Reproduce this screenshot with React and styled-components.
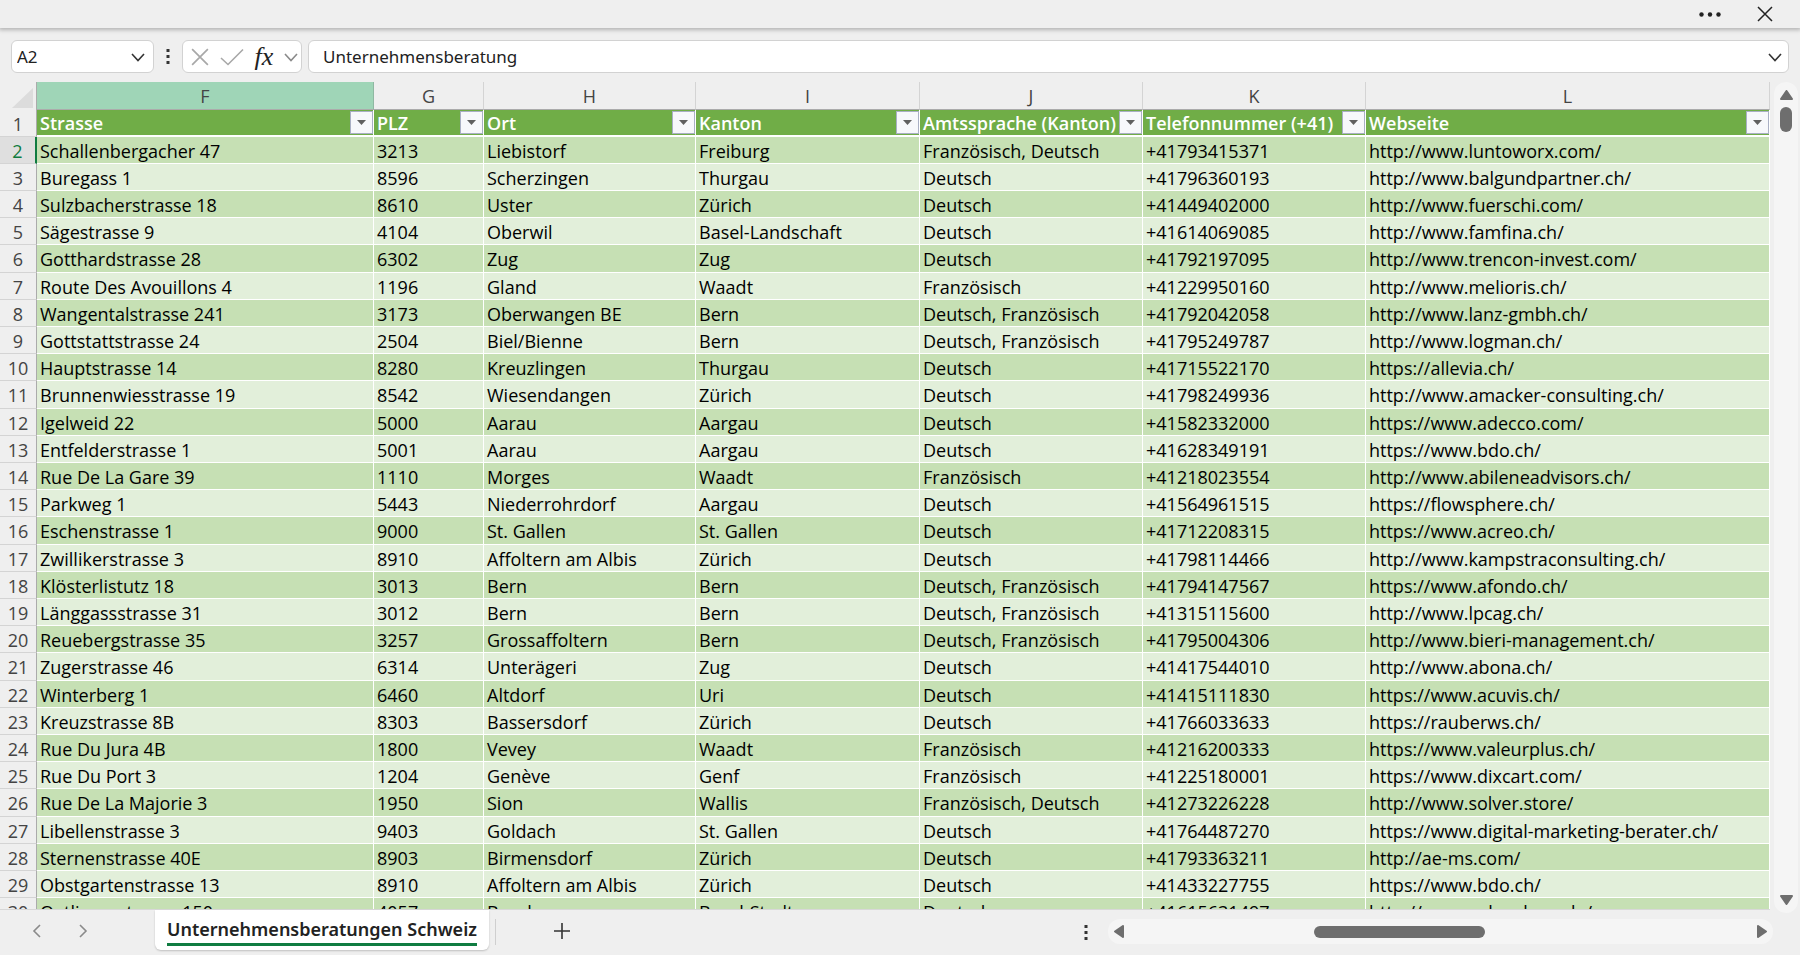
import React from "react";
import styled, { createGlobalStyle, css } from "styled-components";

const columns = [
    { letter: "F", title: "Strasse", w: 337, active: true },
    { letter: "G", title: "PLZ", w: 110 },
    { letter: "H", title: "Ort", w: 212 },
    { letter: "I", title: "Kanton", w: 224 },
    { letter: "J", title: "Amtssprache (Kanton)", w: 223 },
    { letter: "K", title: "Telefonnummer (+41)", w: 223 },
    { letter: "L", title: "Webseite" },
]

const rows = [
    ["Schallenbergacher 47", "3213", "Liebistorf", "Freiburg", "Französisch, Deutsch", "+41793415371", "http://www.luntoworx.com/"],
    ["Buregass 1", "8596", "Scherzingen", "Thurgau", "Deutsch", "+41796360193", "http://www.balgundpartner.ch/"],
    ["Sulzbacherstrasse 18", "8610", "Uster", "Zürich", "Deutsch", "+41449402000", "http://www.fuerschi.com/"],
    ["Sägestrasse 9", "4104", "Oberwil", "Basel-Landschaft", "Deutsch", "+41614069085", "http://www.famfina.ch/"],
    ["Gotthardstrasse 28", "6302", "Zug", "Zug", "Deutsch", "+41792197095", "http://www.trencon-invest.com/"],
    ["Route Des Avouillons 4", "1196", "Gland", "Waadt", "Französisch", "+41229950160", "http://www.melioris.ch/"],
    ["Wangentalstrasse 241", "3173", "Oberwangen BE", "Bern", "Deutsch, Französisch", "+41792042058", "http://www.lanz-gmbh.ch/"],
    ["Gottstattstrasse 24", "2504", "Biel/Bienne", "Bern", "Deutsch, Französisch", "+41795249787", "http://www.logman.ch/"],
    ["Hauptstrasse 14", "8280", "Kreuzlingen", "Thurgau", "Deutsch", "+41715522170", "https://allevia.ch/"],
    ["Brunnenwiesstrasse 19", "8542", "Wiesendangen", "Zürich", "Deutsch", "+41798249936", "http://www.amacker-consulting.ch/"],
    ["Igelweid 22", "5000", "Aarau", "Aargau", "Deutsch", "+41582332000", "https://www.adecco.com/"],
    ["Entfelderstrasse 1", "5001", "Aarau", "Aargau", "Deutsch", "+41628349191", "https://www.bdo.ch/"],
    ["Rue De La Gare 39", "1110", "Morges", "Waadt", "Französisch", "+41218023554", "http://www.abileneadvisors.ch/"],
    ["Parkweg 1", "5443", "Niederrohrdorf", "Aargau", "Deutsch", "+41564961515", "https://flowsphere.ch/"],
    ["Eschenstrasse 1", "9000", "St. Gallen", "St. Gallen", "Deutsch", "+41712208315", "https://www.acreo.ch/"],
    ["Zwillikerstrasse 3", "8910", "Affoltern am Albis", "Zürich", "Deutsch", "+41798114466", "http://www.kampstraconsulting.ch/"],
    ["Klösterlistutz 18", "3013", "Bern", "Bern", "Deutsch, Französisch", "+41794147567", "https://www.afondo.ch/"],
    ["Länggassstrasse 31", "3012", "Bern", "Bern", "Deutsch, Französisch", "+41315115600", "http://www.lpcag.ch/"],
    ["Reuebergstrasse 35", "3257", "Grossaffoltern", "Bern", "Deutsch, Französisch", "+41795004306", "http://www.bieri-management.ch/"],
    ["Zugerstrasse 46", "6314", "Unterägeri", "Zug", "Deutsch", "+41417544010", "http://www.abona.ch/"],
    ["Winterberg 1", "6460", "Altdorf", "Uri", "Deutsch", "+41415111830", "https://www.acuvis.ch/"],
    ["Kreuzstrasse 8B", "8303", "Bassersdorf", "Zürich", "Deutsch", "+41766033633", "https://rauberws.ch/"],
    ["Rue Du Jura 4B", "1800", "Vevey", "Waadt", "Französisch", "+41216200333", "https://www.valeurplus.ch/"],
    ["Rue Du Port 3", "1204", "Genève", "Genf", "Französisch", "+41225180001", "https://www.dixcart.com/"],
    ["Rue De La Majorie 3", "1950", "Sion", "Wallis", "Französisch, Deutsch", "+41273226228", "http://www.solver.store/"],
    ["Libellenstrasse 3", "9403", "Goldach", "St. Gallen", "Deutsch", "+41764487270", "https://www.digital-marketing-berater.ch/"],
    ["Sternenstrasse 40E", "8903", "Birmensdorf", "Zürich", "Deutsch", "+41793363211", "http://ae-ms.com/"],
    ["Obstgartenstrasse 13", "8910", "Affoltern am Albis", "Zürich", "Deutsch", "+41433227755", "https://www.bdo.ch/"],
    ["Oetlingerstrasse 150", "4057", "Basel", "Basel-Stadt", "Deutsch", "+41615631497", "http://www.gaberdann.de/"],
]

const Chevron = ({dir = "down", size = 14, color = "#333"}) => {
    const d = {
        down: "M1 4 L7 10.5 L13 4",
        left: "M10 1 L4 7 L10 13",
        right: "M4 1 L10 7 L4 13",
    }[dir]
    return <svg width={size} height={size} viewBox="0 0 14 14" fill="none" stroke={color} strokeWidth="1.6">
        <path d={d}/>
    </svg>
}

const Cross = ({size, color}) => (
    <svg width={size} height={size} viewBox="0 0 16 16" fill="none" stroke={color} strokeWidth="1.5">
        <path d="M1 1 L15 15 M15 1 L1 15"/>
    </svg>
)

const Dots = () => (
    <svg width="4" height="16" viewBox="0 0 4 16" fill="#333">
        <path d="M.5 0h3v3h-3z M.5 6h3v3h-3z M.5 12h3v3h-3z"/>
    </svg>
)

const Arrow = ({dir}) => {
    const d = {
        up: "M6.5 1 L12 9 H1 Z",
        down: "M1 1 H12 L6.5 9 Z",
        left: "M1 6.5 L9 1 V12 Z",
        right: "M9 6.5 L1 1 V12 Z",
    }[dir]
    const tall = dir == "left" || dir == "right"
    return <svg width={tall ? 10 : 13} height={tall ? 13 : 10} fill="#6e6e6e" stroke="#6e6e6e" strokeWidth="2" strokeLinejoin="round">
        <path d={d}/>
    </svg>
}

export default function App() {
    return <Window>
        <Global/>
        <TitleBar>
            <IconButton aria-label="Weitere Optionen">
                <svg width="22" height="5" viewBox="0 0 22 5" fill="#222">
                    <circle cx="2.5" cy="2.5" r="2.2"/>
                    <circle cx="11" cy="2.5" r="2.2"/>
                    <circle cx="19.5" cy="2.5" r="2.2"/>
                </svg>
            </IconButton>
            <IconButton aria-label="Schliessen"><Cross size={16} color="#222"/></IconButton>
        </TitleBar>

        <FormulaBar>
            <NameBox>
                <BarInput aria-label="Namenfeld" defaultValue="A2"/>
                <IconButton aria-label="Namen anzeigen"><Chevron/></IconButton>
            </NameBox>
            <Grip><Dots/></Grip>
            <Tools>
                <IconButton aria-label="Abbrechen"><Cross size={18} color="#a8a8a8"/></IconButton>
                <IconButton aria-label="Eingeben">
                    <svg width="24" height="18" viewBox="0 0 24 18" fill="none" stroke="#a8a8a8" strokeWidth="1.6">
                        <path d="M1 10 L8 16.5 L23 1.5"/>
                    </svg>
                </IconButton>
                <Fx aria-label="Funktion einfügen">fx</Fx>
                <IconButton aria-label="Funktionen"><Chevron color="#8a8a8a"/></IconButton>
            </Tools>
            <Formula>
                <BarInput aria-label="Bearbeitungsleiste" defaultValue="Unternehmensberatung"/>
                <IconButton aria-label="Bearbeitungsleiste erweitern"><Chevron/></IconButton>
            </Formula>
        </FormulaBar>

        <Body>
            <Sheet>
                <Table>
                    <colgroup>
                        <Col w={37}/>
                        {columns.map(c => <Col key={c.letter} w={c.w}/>)}
                    </colgroup>
                    <thead>
                        <LetterRow>
                            <Corner>
                                <svg width="21" height="21" fill="#dcdcdc"><path d="M21 0 V20 H0 Z"/></svg>
                            </Corner>
                            {columns.map(c => <Letter key={c.letter} $active={c.active}>{c.letter}</Letter>)}
                        </LetterRow>
                        <TitleRow>
                            <Num>1</Num>
                            {columns.map(c => (
                                <Title key={c.letter}>
                                    <TitleInner>
                                        {c.title}
                                        <Filter aria-label={`${c.title} filtern`}>
                                            <svg width="9" height="5" fill="#606060"><path d="M0 0 H9 L4.5 5 Z"/></svg>
                                        </Filter>
                                    </TitleInner>
                                </Title>
                            ))}
                        </TitleRow>
                    </thead>
                    <tbody>
                        {rows.map((row,i) => (
                            <Row key={i}>
                                <Num $active={i == 0}>{i+2}</Num>
                                {row.map((value,j) => <Cell key={j}>{value}</Cell>)}
                            </Row>
                        ))}
                    </tbody>
                </Table>
            </Sheet>
            <VScroll>
                <Arrow dir="up"/>
                <VThumb/>
                <Arrow dir="down"/>
            </VScroll>
        </Body>

        <Footer>
            <Nav>
                <IconButton aria-label="Vorheriges Blatt"><Chevron dir="left" color="#8a8a8a"/></IconButton>
                <IconButton aria-label="Nächstes Blatt"><Chevron dir="right" color="#8a8a8a"/></IconButton>
            </Nav>
            <Tab><TabLabel>Unternehmensberatungen Schweiz</TabLabel></Tab>
            <Divider/>
            <AddButton aria-label="Neues Blatt">
                <svg width="16" height="16" stroke="#333" strokeWidth="1.6"><path d="M8 0 V16 M0 8 H16"/></svg>
            </AddButton>
            <FooterGrip><Dots/></FooterGrip>
            <HScroll>
                <Arrow dir="left"/>
                <HTrack><HThumb/></HTrack>
                <Arrow dir="right"/>
            </HScroll>
        </Footer>
    </Window>
}


const Global = createGlobalStyle`
    * {
        box-sizing: border-box;
    }

    body {
        margin: 0px;
        background-color: #efefef;
        font-family: "Noto Sans", "Open Sans", sans-serif;
        color: #222;
    }
`

const Window = styled.div`
    display: flex;
    flex-direction: column;
    height: 100vh;
    overflow: hidden;
`

const IconButton = styled.button`
    display: flex;
    align-items: center;
    justify-content: center;
    padding: 0px;
    border: none;
    background-color: transparent;
`

const TitleBar = styled.header`
    display: flex;
    flex-shrink: 0;
    justify-content: flex-end;
    gap: 36px;
    height: 28px;
    padding-right: 27px;
    box-shadow: 0px 1px 4px 1px rgba(0, 0, 0, 0.25);
`

const FormulaBar = styled.div`
    display: flex;
    flex-shrink: 0;
    height: 54px;
    padding: 12px 11px 9px;
`

const Box = styled.div`
    display: flex;
    align-items: center;
    height: 33px;
    border: solid 1px #d2d2d2;
    border-radius: 6px;
    background-color: white;
`

const NameBox = styled(Box)`
    width: 143px;
    padding: 0px 8px 0px 5px;
`

const Grip = styled.div`
    display: flex;
    align-items: center;
    justify-content: center;
    width: 28px;
`

const Tools = styled(Box)`
    width: 120px;
    justify-content: space-between;
    padding: 0px 3px 0px 8px;
    margin-right: 6px;
`

const Formula = styled(Box)`
    flex: 1;
    padding: 0px 6px 0px 14px;
`

const BarInput = styled.input`
    flex: 1;
    min-width: 0px;
    padding: 0px;
    border: none;
    background-color: transparent;
    font-family: inherit;
    font-size: 17px;
    color: #222;

    &:focus {
        outline: none;
    }
`

const Fx = styled(IconButton)`
    font-family: "Liberation Serif", serif;
    font-size: 26px;
    font-style: italic;
    line-height: 26px;
    color: #222;
`

const Body = styled.main`
    display: flex;
    flex: 1;
    min-height: 0px;
`

const Sheet = styled.div`
    flex: 1;
    overflow: hidden;
    border-bottom: solid 1px #d8d8d8;
`

const Table = styled.table`
    width: 100%;
    table-layout: fixed;
    border-collapse: separate;
    border-spacing: 0px;
    font-family: "Open Sans", sans-serif;
    font-size: 18px;
    line-height: 24px;
    color: #000;
`

const Col = styled.col`
    width: ${p => p.w ? p.w + "px" : "auto"};
`

const LetterRow = styled.tr`
    height: 28px;
`

const Corner = styled.td`
    padding: 4px 3px 0px 0px;
    border-right: solid 1px #ababab;
    line-height: 0px;
    text-align: right;
`

const Letter = styled.th`
    padding: 0px;
    border-bottom: solid 1px #ababab;
    border-right: solid 1px #d4d4d4;
    font-weight: 400;
    color: #444;

    ${p => p.$active && css`
        background-color: #9fd5b7;
        border-right-color: #8fb8a2;
    `}
`

const TitleRow = styled.tr`
    height: 27px;
`

const Num = styled.th`
    padding: 1px 0px 0px;
    border-right: solid 1px #ababab;
    border-bottom: solid 1px #d4d4d4;
    font-weight: 400;
    color: #444;

    ${p => p.$active && css`
        background-color: #dfdfdf;
        border-right: solid 2px #107c41;
        color: #107c41;
    `}
`

const Title = styled.th`
    padding: 0px 0px 0px 3px;
    border-right: solid 1px white;
    border-bottom: solid 2px white;
    background-color: #70ad47;
    font-weight: 600;
    text-align: left;
    color: white;
    white-space: nowrap;
`

const TitleInner = styled.div`
    display: flex;
    align-items: center;
    justify-content: space-between;
    height: 25px;
`

const Filter = styled.button`
    display: flex;
    flex-shrink: 0;
    align-items: center;
    justify-content: center;
    width: 23px;
    height: 23px;
    padding: 0px;
    border: solid 1px #a9afc4;
    background-color: #f7f8fb;
`

/* rows are a little over 27px tall, the rest is made up on every fifth one */
const Row = styled.tr`
    height: 27px;
    background-color: #e2efda;

    &:nth-child(odd) {
        background-color: #c6e0b4;
    }

    &:nth-child(5n) {
        height: 28px;
    }

    & > th:first-child {
        background-color: #efefef;
    }

    &:first-child > th:first-child {
        background-color: #dfdfdf;
    }
`

const Cell = styled.td`
    padding: 1px 0px 0px 3px;
    border-right: solid 1px white;
    border-bottom: solid 1px white;
    white-space: nowrap;
`

const VScroll = styled.div`
    display: flex;
    flex-direction: column;
    align-items: center;
    width: 24px;
    margin: 0px 2px -3px 4px;
    padding: 8px 0px;
    border-radius: 12px;
    background-color: #f5f5f5;

    & > svg:last-child {
        margin-top: auto;
    }
`

const VThumb = styled.div`
    width: 12px;
    height: 25px;
    margin-top: 7px;
    border-radius: 6px;
    background-color: #6e6e6e;
`

const Footer = styled.footer`
    display: flex;
    flex-shrink: 0;
    height: 45px;
    padding-right: 27px;
`

const Nav = styled.nav`
    display: flex;
    gap: 32px;
    width: 155px;
    padding-left: 30px;
    padding-bottom: 3px;
`

const Tab = styled.button`
    height: 40px;
    padding: 0px 12px;
    border: none;
    border-radius: 0px 0px 6px 6px;
    background-color: white;
    box-shadow: 0px 1px 2px rgba(0, 0, 0, 0.2);
`

const TabLabel = styled.span`
    display: block;
    border-bottom: solid 3px #107c41;
    font-family: "Noto Sans", sans-serif;
    font-size: 18px;
    font-weight: 600;
    line-height: 28px;
    color: #222;
`

const Divider = styled.div`
    width: 1px;
    height: 26px;
    margin: 9px 58px 0px 6px;
    background-color: #cfcfcf;
`

const AddButton = styled(IconButton)`
    height: 42px;
`

const FooterGrip = styled(Grip)`
    height: 45px;
    margin-left: auto;
    margin-right: 8px;
`

const HScroll = styled.div`
    display: flex;
    align-items: center;
    width: 37.5%;
    height: 25px;
    margin-top: 9px;
    padding: 0px 6px;
    border-radius: 12px;
    background-color: #f5f5f5;
`

const HTrack = styled.div`
    flex: 1;
`

const HThumb = styled.div`
    width: 27%;
    height: 12px;
    margin-left: 30%;
    border-radius: 6px;
    background-color: #6e6e6e;
`
